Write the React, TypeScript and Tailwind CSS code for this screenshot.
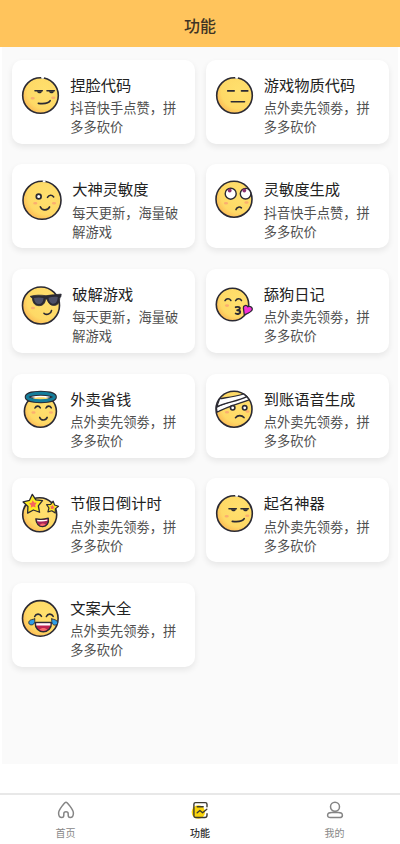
import React from 'react';

const INK = '#2b2a33';

interface FaceProps {
  cx?: number;
  cy?: number;
  r?: number;
  gap?: boolean;
  size?: number;
  children?: React.ReactNode;
}

function Face({ cx = 18.5, cy = 18.5, r = 17.8, gap = false, size = 38, children }: FaceProps) {
  return (
    <svg
      width={size}
      height={size}
      viewBox={`0 0 ${size} ${size}`}
      fill="none"
      strokeLinecap="round"
      strokeLinejoin="round"
      className="shrink-0 overflow-visible"
    >
      <defs>
        <radialGradient id="skin" cx="0.62" cy="0.38" r="0.7">
          <stop offset="0" stopColor="#ffe06e" />
          <stop offset="0.7" stopColor="#fed966" />
          <stop offset="1" stopColor="#fbb452" />
        </radialGradient>
      </defs>
      <circle cx={cx} cy={cy} r={r} fill="url(#skin)" stroke={INK} strokeWidth="1.6" />
      {gap && <path d={`M${cx + 1.6} ${cy - r}h1`} stroke="#fff" strokeWidth="2" />}
      {children}
    </svg>
  );
}

function Cheeks({ points }: { points: number[][] }) {
  return (
    <>
      {points.map(([x, y]) => (
        <ellipse key={x} cx={x} cy={y} rx="2.1" ry="1.3" fill="#fbae70" />
      ))}
    </>
  );
}

function Smirk() {
  return (
    <Face gap>
      <Cheeks points={[[10.7, 21.2], [31.3, 20.8]]} />
      <path d="M14.8 14.2h5.2c-.4 2.8-4.2 2.8-5.2 0zM26.8 14.2h5.2c-.4 2.8-4.2 2.8-5.2 0z" fill={INK} />
      <path d="M13 13.7h7.3M25 13.7h7.3M16.3 26.4c5 .5 10.5.2 11.9-2.7" stroke={INK} strokeWidth="1.6" />
    </Face>
  );
}

function Neutral() {
  return (
    <Face gap>
      <path d="M11.7 13.9h6.5M25.5 13.9h6.3M15.3 24.8h13.2" stroke={INK} strokeWidth="1.6" />
    </Face>
  );
}

function Wink() {
  return (
    <Face cx={20} cy={19.3} r={19} size={40} gap>
      <Cheeks points={[[13.3, 22.3], [32, 22.3]]} />
      <circle cx="16.7" cy="15.5" r="2.4" fill="#fff" stroke={INK} strokeWidth="1.7" />
      <path d="M25.5 16.3c1.500-2.600 4.500-2.600 6.200-.4M18.300 25.700c1.500 4.200 7.600 4.200 9.300.2" stroke={INK} strokeWidth="1.6" />
    </Face>
  );
}

function RollingEyes() {
  return (
    <Face cx={18} cy={18.2} r={18}>
      <Cheeks points={[[10, 22.2], [30.5, 21.5]]} />
      <circle cx="14.7" cy="12.7" r="5.5" fill="#fff" stroke={INK} strokeWidth="1.4" />
      <circle cx="29.6" cy="12.7" r="5.3" fill="#fff" stroke={INK} strokeWidth="1.4" />
      <circle cx="13.7" cy="9.5" r="1.9" fill="#8d3170" />
      <circle cx="28.3" cy="9.5" r="1.9" fill="#8d3170" />
      <path d="M20 28.600c.8-2.600 3.600-3.300 5.400-1.800" stroke={INK} strokeWidth="1.6" />
    </Face>
  );
}

function Cool() {
  return (
    <Face cx={19} cy={19.5} r={18.5} size={40}>
      <Cheeks points={[[11, 22]]} />
      <path
        d="M8.500 10.300c5-1.500 10-1.300 15.500-.6 5-.8 10-1 15.200-1.600l-.4 2.800c-1 .3-.9 1-1.300 3.300-.7 4-3 5.300-6.200 5.200-3.600-.1-5.200-3-6.300-6.200-1.300-.5-1.300 0-1.700 1.500-.9 3.500-3 5-6.100 5-4 0-6.200-2.200-6.800-7.200z"
        fill={INK}
        stroke={INK}
        strokeWidth="0.8"
      />
      <path
        d="M12 12c3-.8 6.500-.8 9.500.1-.2 4-2 6-4.500 6-3 0-4.600-2-5-6.100zM26.500 11.700c3-.9 6.300-1.100 9.300-.7-.3 4.500-1.700 6.700-4.500 6.700-2.700 0-4.300-2.400-4.800-6z"
        fill="#4d5068"
      />
      <path d="M22 27.300c2.800 2.100 7 .7 7.500-2.700" stroke={INK} strokeWidth="1.6" />
    </Face>
  );
}

function Kiss() {
  return (
    <Face cx={16.5} cy={18.5} r={16.2}>
      <Cheeks points={[[11, 19.6]]} />
      <path d="M9 14.700c1.400-2.600 4.400-2.600 5.900-.2M19.600 14.700c1.400-2.600 4.400-2.600 5.900-.2" stroke={INK} strokeWidth="1.5" />
      <path d="M19.700 21.200c3-.8 4.400.2 4.100 1.600-.2 1-1.500 1.400-2.600 1.400 1.600 0 3 .4 3 1.900 0 1.700-2.400 2.300-4.500 1.400" stroke={INK} strokeWidth="1.9" />
      <path
        d="M28.300 29l-.9-7c-.3-2.600 3-3.600 4.500-1.200 2.400-1.300 5 .9 4.300 3.100-.6 2-4.300 3.500-7.900 5.100z"
        fill="#f52fd8"
        stroke={INK}
        strokeWidth="1.3"
      />
    </Face>
  );
}

function Halo() {
  return (
    <Face cx={18.4} cy={20.3} r={16}>
      <Cheeks points={[[11.5, 21.5], [29, 21.5]]} />
      <ellipse cx="18.8" cy="6" rx="13.6" ry="3.7" fill="#fff" stroke={INK} strokeWidth="5" />
      <path d="M10.500 7.800c4 1.800 12.500 1.800 16.600 0-2-2.200-14.600-2.200-16.600 0z" fill="#fed966" />
      <ellipse cx="18.800" cy="6" rx="13.600" ry="3.8" stroke="#167d9b" strokeWidth="2.9" />
      <path d="M17.700 26.400c1.200 3.400 6.200 3.400 7.500 0" stroke={INK} strokeWidth="1.6" />
      <path d="M13 17c1.200-2.500 4-2.500 5.300-.2M24 17c1.200-2.500 4-2.500 5.300-.2" stroke={INK} strokeWidth="1.6" />
    </Face>
  );
}

function Bandage() {
  return (
    <Face cx={18} cy={18.2} r={18}>
      <Cheeks points={[[11, 21.3], [31.5, 20.5]]} />
      <path d="M.4 16.500C12 10.300 20 9.600 30.600 5.300l2.600 3.500C22 13 12 15 1 21.300z" fill="#fff" stroke={INK} strokeWidth="1.3" />
      <path d="M3.600 7.700C12 6.400 20 5.600 27.600 3l3.200 2.600C22 10.300 11 11 .8 15.600z" fill="#fff" stroke={INK} strokeWidth="1.3" />
      <circle cx="16.7" cy="16.8" r="2.2" fill="#fff" stroke={INK} strokeWidth="1.6" />
      <circle cx="28.7" cy="16.8" r="2.2" fill="#fff" stroke={INK} strokeWidth="1.6" />
      <path d="M19.500 26.700c2.200-2.700 6.300-2.700 8.500-.1" stroke={INK} strokeWidth="1.6" />
    </Face>
  );
}

const STAR = 'M0-10 3.200-4.200 9.700-3 5.200 1.900 6 8.400 0 5.700-6 8.400-5.200 1.900-9.700-3-3.200-4.200z';

function StarEyes() {
  return (
    <Face cx={17.7} cy={19.7} r={17}>
      <g transform="translate(11 9.300) rotate(-4)">
        <path d={STAR} fill="#fdea24" stroke={INK} strokeWidth="1.3" />
        <path d={STAR} transform="scale(.4)" fill="#f8645c" />
      </g>
      <g transform="translate(30.300 12.300) rotate(8) scale(.62)">
        <path d={STAR} fill="#fdea24" stroke={INK} strokeWidth="1.9" />
        <path d={STAR} transform="scale(.4)" fill="#f8645c" />
      </g>
      <path d="M13.800 23.800c4 .8 8.500.6 12.500-.6 1 5-1.600 8.200-5.500 8.400-4 .2-6.700-3-7-7.800z" fill="#a92558" stroke={INK} strokeWidth="1.3" />
      <path d="M15 24.800c3.500.5 6.800.4 10.300-.4v1.400c-3.300.8-6.600.9-9.900.4z" fill="#fff" />
      <path d="M17.500 30c1.700-2 4.600-2.100 6.300-.5-1.600 1.700-4.600 1.900-6.300.5z" fill="#f76b6b" />
    </Face>
  );
}

function Laugh() {
  return (
    <Face cx={18.3} cy={18.4} r={17.8}>
      <path d="M12.700 16.500c1.300-3 5.200-3.200 6.800-.2M24.400 16.500c1.300-3 5.200-3.200 6.800-.2" stroke={INK} strokeWidth="1.6" />
      <path d="M13.200 22.500h16.100c.4 5.600-3.300 9.200-8 9.200s-8.300-3.600-8.100-9.200z" fill="#bf234f" stroke={INK} strokeWidth="1.4" />
      <path d="M14.200 23.300h14.200v2.200H14.300z" fill="#fff" />
      <path d="M17.300 29.600c2-2.300 6-2.300 8 0-2.200 1.900-5.800 1.900-8 0z" fill="#f76b6b" />
      <path d="M12.700 18.900c.6 4-1 6-3.300 6s-3.500-2.200-2-4c1-1.300 2.800-1.300 5.300-2zM29.800 18.900c-.6 4 1 6.400 3.300 6.200s3.300-2.200 1.900-4c-1-1.300-2.700-1.500-5.200-2.200z" fill="#2e9ee6" stroke={INK} strokeWidth="0.9" />
    </Face>
  );
}

const COUPON = '点外卖先领劵，拼多多砍价';
const LIKES = '抖音快手点赞，拼多多砍价';
const DAILY = '每天更新，海量破解游戏';

const features = [
  { title: '捏脸代码', desc: LIKES, Icon: Smirk },
  { title: '游戏物质代码', desc: COUPON, Icon: Neutral },
  { title: '大神灵敏度', desc: DAILY, Icon: Wink },
  { title: '灵敏度生成', desc: LIKES, Icon: RollingEyes },
  { title: '破解游戏', desc: DAILY, Icon: Cool },
  { title: '舔狗日记', desc: COUPON, Icon: Kiss },
  { title: '外卖省钱', desc: COUPON, Icon: Halo },
  { title: '到账语音生成', desc: COUPON, Icon: Bandage },
  { title: '节假日倒计时', desc: COUPON, Icon: StarEyes },
  { title: '起名神器', desc: COUPON, Icon: Smirk },
  { title: '文案大全', desc: COUPON, Icon: Laugh },
];

function HomeIcon() {
  return (
    <svg width="18" height="18" viewBox="0 0 18 18" fill="none" stroke="#858585" strokeWidth="1.5" strokeLinejoin="round">
      <path d="M9 1.200C10.200 1.200 16.400 8.600 16.400 12c0 3.200-1.500 4.600-3.200 4.600-1.500 0-2-.8-2-2.300v-1.600c0-1.300-.8-2-2.200-2s-2.200.7-2.200 2v1.600c0 1.500-.5 2.300-2 2.300-1.700 0-3.200-1.400-3.200-4.600C1.600 8.600 7.800 1.200 9 1.200z" />
    </svg>
  );
}

function FeatureIcon() {
  return (
    <svg width="18" height="18" viewBox="0 0 18 18" fill="none" strokeLinecap="round" strokeLinejoin="round">
      <circle cx="7.300" cy="11" r="6.700" fill="#fbd50a" />
      <path d="M16 5.800V3.200c0-1-.7-1.600-1.700-1.600H4.600c-1 0-1.700.7-1.700 1.700v11.500c0 1 .7 1.700 1.700 1.700h9.200c1.300 0 2.200-.9 2.200-2.300v-1.500" stroke="#3d3a30" strokeWidth="1.4" />
      <path d="M6.200 5.800h6M6.200 11.800l2.700-2.300 2.700 2.200 4.200-3.500" stroke="#3d3a30" strokeWidth="1.4" />
    </svg>
  );
}

function UserIcon() {
  return (
    <svg width="18" height="18" viewBox="0 0 18 18" fill="none" stroke="#858585" strokeWidth="1.5">
      <circle cx="9" cy="5.800" r="4.500" />
      <path d="M5.800 11.500h6.400c2.700 0 4.200 1 4.200 2.700s-1 2.400-2.700 2.400H4.300c-1.700 0-2.700-.8-2.700-2.400s1.500-2.700 4.200-2.700z" />
    </svg>
  );
}

const tabs = [
  { label: '首页', Icon: HomeIcon, active: false },
  { label: '功能', Icon: FeatureIcon, active: true },
  { label: '我的', Icon: UserIcon, active: false },
];

export default function App() {
  return (
    <div className="flex h-[844px] w-[400px] flex-col overflow-hidden bg-white font-['Noto_Sans_CJK_SC',sans-serif]">
      <header className="flex h-[47px] shrink-0 items-center justify-center bg-[#ffc45c] pt-[2px]">
        <h1 className="text-[16px] font-medium leading-6 text-[#3f3424]">功能</h1>
      </header>

      <main className="mx-[2px] h-[717px] shrink-0 bg-[#fafafa] px-[10px] pt-[12.5px]">
        <div className="grid grid-cols-[183px_183px] gap-x-[10.5px] gap-y-[20.7px]">
          {features.map(({ title, desc, Icon }) => (
            <div key={title} className="flex h-[84px] items-start rounded-[10px] bg-white pl-[10px] pt-[17px] shadow-[0_3px_6px_rgba(0,0,0,0.08)]">
              <Icon />
              <div className="-mt-[4px] ml-[10.3px] w-[112px]">
                <h2 className="text-[15.25px] leading-[23px] text-[#222]">{title}</h2>
                <p className="mt-[2.5px] w-[108px] text-[13.25px] leading-[19px] text-[#505050]">{desc}</p>
              </div>
            </div>
          ))}
        </div>
      </main>

      {/* Bottom tab bar */}
      <nav className="mt-[29px] grid flex-1 grid-cols-[131px_138px_131px] border-t-2 border-[#e8e8e8] bg-white">
        {tabs.map(({ label, Icon, active }) => (
          <div key={label} className="flex flex-col items-center pt-[6px]">
            <Icon />
            <span className={`mt-[6px] text-[10px] leading-4 ${active ? 'font-medium text-[#333]' : 'text-[#888]'}`}>
              {label}
            </span>
          </div>
        ))}
      </nav>
    </div>
  );
}
